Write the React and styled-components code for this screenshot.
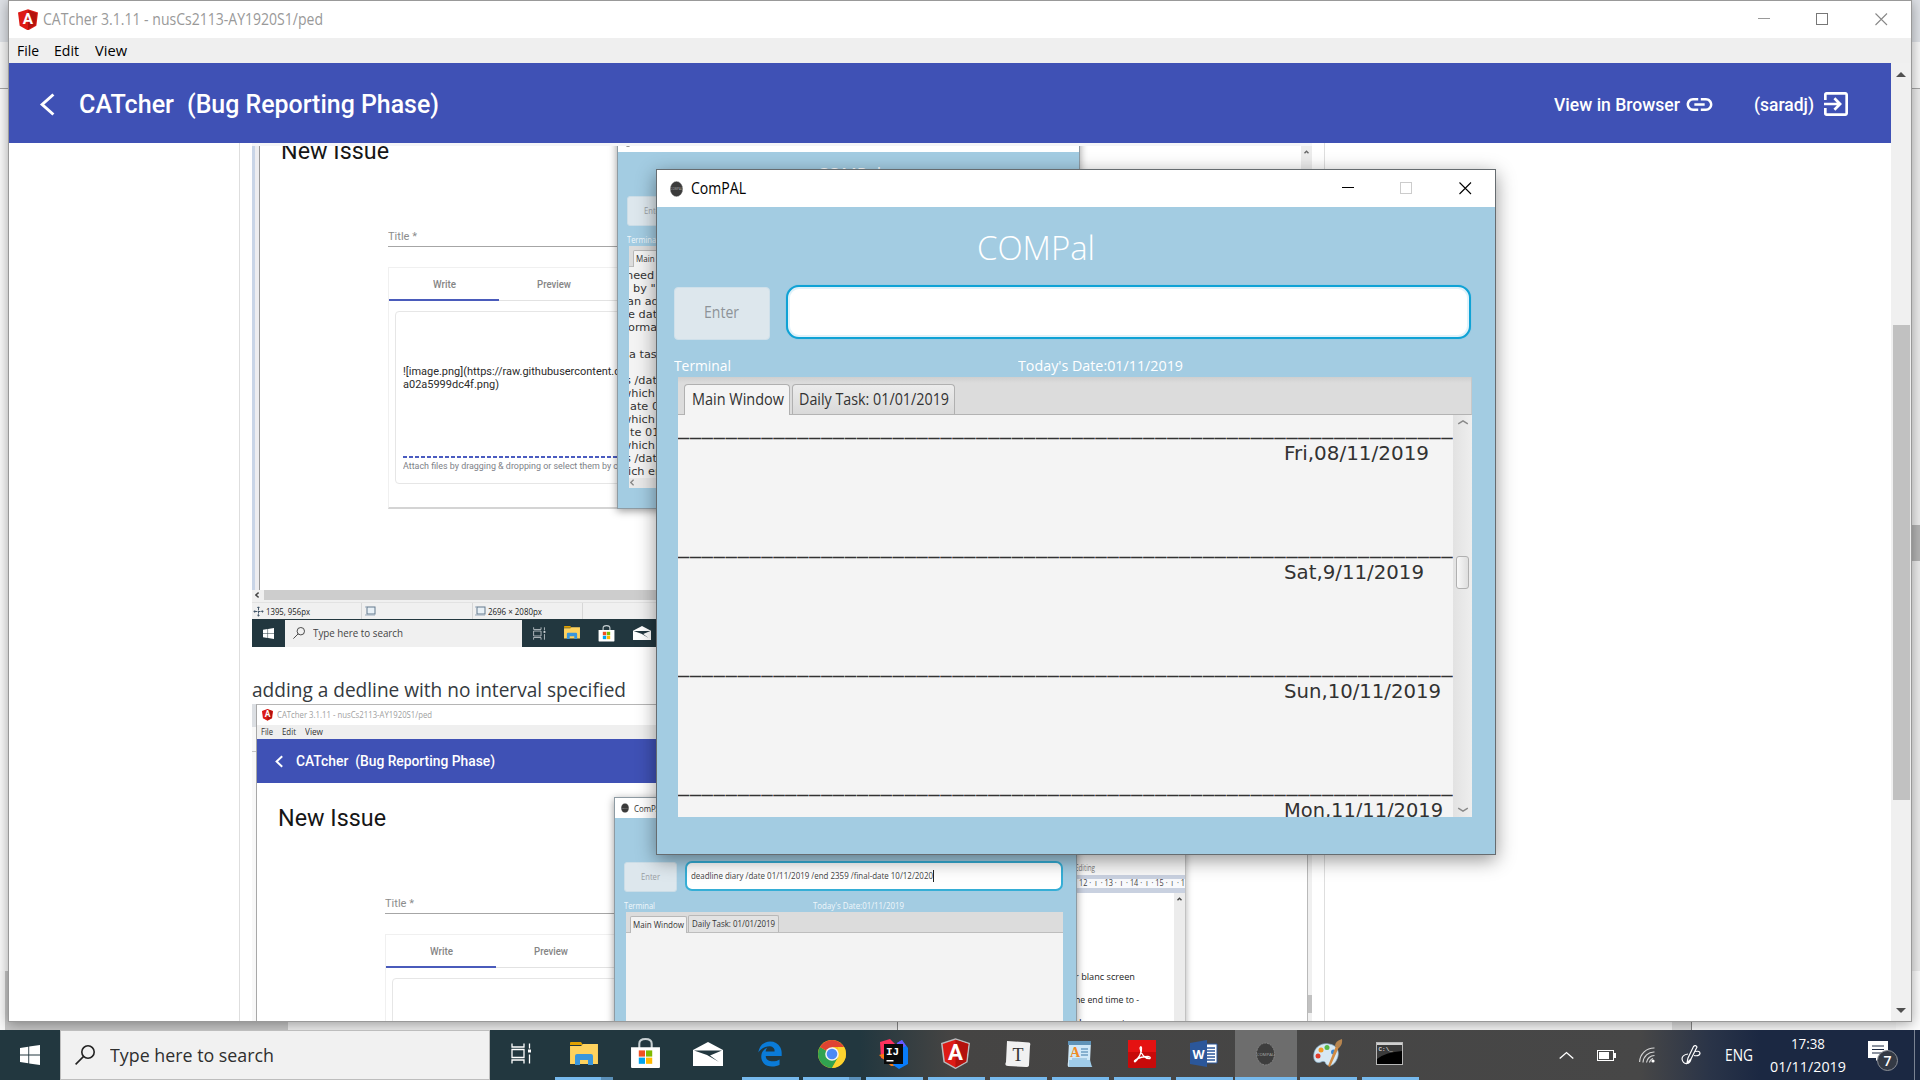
import React, { useLayoutEffect, useRef, useState } from "react";
import styled, { createGlobalStyle, css } from "styled-components";
import { MdLink, MdExitToApp } from "react-icons/md";
import { FaEdgeLegacy } from "react-icons/fa6";

const Global = createGlobalStyle`
  * { box-sizing: border-box; }
  html, body { margin: 0; padding: 0; overflow: hidden; }
  body { font-family: "Open Sans", "Noto Sans", sans-serif; }
  svg { display: block; flex: none; }
`;

const roboto = css`font-family: Roboto, "Liberation Sans", sans-serif;`;
const verdana = css`font-family: "DejaVu Sans", Verdana, sans-serif;`;

/* Text condensed or widened to a known width */
const FitBox = styled.span`
  display: block;
  flex: none;
  width: ${(p) => p.$w}px;
  margin-left: ${(p) => p.$ml || 0}px;
  white-space: pre;
`;
const FitInner = styled.span`
  display: inline-block;
  transform-origin: 0 50%;
`;
function Fit({ w, ml, children }) {
  const ref = useRef(null);
  const [scale, setScale] = useState(1);
  useLayoutEffect(() => {
    setScale(w / ref.current.getBoundingClientRect().width);
  }, []);
  return (
    <FitBox $w={w} $ml={ml}>
      <FitInner ref={ref} style={{ transform: `scaleX(${scale})` }}>{children}</FitInner>
    </FitBox>
  );
}

/* ---------- desktop ---------- */
const Desktop = styled.div`
  position: relative;
  width: 1920px;
  height: 1080px;
  overflow: hidden;
  background: #f8f8f8;
  display: flex;
  flex-direction: column;
`;
const Behind = styled.div`
  flex: 1;
  display: flex;
  justify-content: space-between;
`;
const BackEdge = styled.div`
  width: 24px;
  display: flex;
  flex-direction: column;
`;
const EdgePart = styled.div`
  height: ${(p) => p.$h}px;
  flex: none;
  margin-left: ${(p) => p.$ml || 0}px;
  background: ${(p) => p.$bg};
  border-bottom: ${(p) => (p.$line ? "1px solid #a5a5a5" : "0")};
`;
const BackBottom = styled.div`
  display: flex;
  align-self: flex-end;
  flex: 1;
  height: 14px;
  margin: 0 -19px;
`;
const BottomPart = styled.div`
  width: ${(p) => p.$w}px;
  background: ${(p) => p.$bg};
  border-right: ${(p) => (p.$line ? "1px solid #858585" : "0")};
`;

const Window = styled.div`
  position: absolute;
  left: ${(p) => p.$x}px;
  top: ${(p) => p.$y}px;
  width: ${(p) => p.$w}px;
  height: ${(p) => p.$h}px;
  border: 1px solid ${(p) => p.$border};
  box-shadow: ${(p) => p.$shadow};
  background: #fff;
  overflow: hidden;
  display: flex;
  flex-direction: column;
`;
const TitleBar = styled.div`
  height: 37px;
  flex: none;
  display: flex;
  align-items: center;
  background: #fff;
  padding: ${(p) => p.$pad};
  font-size: 15.5px;
  line-height: 20px;
  color: ${(p) => p.$color};
`;
const TitleText = styled.div`
  padding-bottom: 2px;
`;
const WinButtons = styled.div`
  margin-left: auto;
  display: flex;
  gap: 46px;
  align-items: center;
`;
const MenuBar = styled.div`
  height: 25px;
  flex: none;
  display: flex;
  align-items: center;
  background: #efefef;
  padding: 0 0 2px 8px;
  gap: 15px;
  font-size: 15px;
  color: #000;
`;
const PageRow = styled.div`
  flex: 1;
  display: flex;
  min-height: 0;
`;
const Page = styled.div`
  flex: 1;
  display: flex;
  flex-direction: column;
  min-width: 0;
`;
const Header = styled.div`
  ${roboto}
  height: 80px;
  flex: none;
  background: #3f51b5;
  color: #fff;
  display: flex;
  align-items: center;
  padding: 2px 39px 0 30px;
  font-weight: 500;
  font-size: 25px;
`;
const HeaderLinks = styled.div`
  margin-left: auto;
  display: flex;
  align-items: center;
  font-size: 18px;
`;
const Column = styled.div`
  flex: 1;
  min-height: 0;
  width: 1086px;
  margin-left: 230px;
  padding: 0 12px;
  border-left: 1px solid #dedede;
  border-right: 1px solid #dedede;
  overflow: hidden;
`;
const Paragraph = styled.div`
  height: 57px;
  padding-top: 29px;
  font-size: 20px;
  line-height: 28px;
  color: #353a40;
`;
const ScrollBar = styled.div`
  width: 20px;
  flex: none;
  background: #f0f0f0;
  display: flex;
  flex-direction: column;
  align-items: center;
  padding: 9px 0 8px;
`;
const ScrollThumb = styled.div`
  width: 17px;
  height: 475px;
  margin-top: 248px;
  background: #c1c1c1;
`;
const Spacer = styled.div`flex: 1;`;

/* ---------- embedded screenshots ---------- */
const Shot = styled.div`
  height: ${(p) => p.$h}px;
  overflow: hidden;
  display: flex;
  flex-direction: column;
  background: #fff;
`;
const TopSliver = styled.div`
  height: 3px;
  flex: none;
  background: #f4f5f8;
`;
const ShotBody = styled.div`
  flex: 1;
  min-height: 0;
  display: flex;
`;
const Strip = styled.div`
  width: ${(p) => p.$w}px;
  flex: none;
  background: ${(p) => p.$bg};
`;
const SheetArea = styled.div`
  position: relative;
  flex: 1;
  overflow: hidden;
  background: #fff;
`;
const SmallScroll = styled.div`
  width: 11px;
  flex: none;
  background: #ececec;
  padding: 4px 0 0 3px;
`;
const HScroll = styled.div`
  height: 12px;
  flex: none;
  display: flex;
  align-items: flex-start;
  background: #f0f0f0;
  padding-left: 3px;
`;
const HArrow = styled.div`
  padding-top: 2px;
`;
const HThumb = styled.div`
  flex: 1;
  height: 10px;
  margin-left: 5px;
  background: #cdcdcd;
`;
const StatusBar = styled.div`
  height: 17px;
  flex: none;
  display: flex;
  background: #f0f0f0;
  border-top: 1px solid #e2e2e2;
  font-size: 8.4px;
  color: #222;
`;
const StatusCell = styled.div`
  width: ${(p) => p.$w}px;
  display: flex;
  align-items: center;
  padding-left: ${(p) => p.$pl}px;
  gap: 2px;
  border-right: 1px solid #d7d7d7;
`;
const MiniTaskbar = styled.div`
  height: 28px;
  flex: none;
  display: flex;
  align-items: center;
  background: #22373f;
`;
const MiniSearch = styled.div`
  width: 237px;
  height: 27px;
  display: flex;
  align-items: center;
  gap: 8px;
  padding-left: 8px;
  margin-left: 11px;
  background: #f0f0f0;
  font-size: 10.5px;
  color: #444;
`;
const MiniIcons = styled.div`
  display: flex;
  align-items: center;
  gap: 18px;
  padding-left: 11px;
`;

/* issue form */
const Form = styled.div`
  ${roboto}
  padding: 23px 0 0 21px;
  margin-top: ${(p) => p.$shift || 0}px;
`;
const Heading = styled.div`
  font-size: 24px;
  line-height: 24px;
  height: 90px;
  color: #161616;
`;
const TitleField = styled.div`
  width: 600px;
  height: 18px;
  margin-left: 107px;
  font-size: 10.5px;
  line-height: 16px;
  color: #8c8c8c;
  border-bottom: 1px solid #a6a6a6;
`;
const Card = styled.div`
  width: 480px;
  height: 242px;
  margin: 20px 0 0 107px;
  border: 1px solid #f0f0f0;
  border-bottom: 2px solid #d4d4d4;
`;
const Tabs = styled.div`
  display: flex;
  height: 33px;
  border-bottom: 1px solid #e2e2e2;
`;
const Tab = styled.div`
  width: 110px;
  height: 33px;
  display: flex;
  justify-content: center;
  font-weight: 500;
  font-size: 10px;
  line-height: 33px;
  color: #858585;
  border-bottom: 2px solid ${(p) => (p.$on ? "#4a5bbb" : "transparent")};
`;
const TextBox = styled.div`
  height: 173px;
  margin: 10px 6px 0;
  border: 1px solid #e6e6e6;
  border-radius: 4px;
  padding: 53px 0 0 7px;
  font-size: 10.8px;
  line-height: 13px;
  color: #2b2b2b;
`;
const Dashed = styled.div`
  margin-top: 65px;
  height: 2px;
  background: repeating-linear-gradient(90deg, #4a5bc0 0 4px, #fff 4px 6px);
`;
const Hint = styled.div`
  font-size: 9.4px;
  line-height: 16px;
  color: #7d8187;
`;

function IssueForm({ shift, filled }) {
  return (
    <Form $shift={shift}>
      <Heading><Fit w={108}>New Issue</Fit></Heading>
      <TitleField><Fit w={29}>Title *</Fit></TitleField>
      <Card>
        <Tabs>
          <Tab $on><Fit w={23}>Write</Fit></Tab>
          <Tab><Fit w={34}>Preview</Fit></Tab>
        </Tabs>
        <TextBox>
          {filled && (
            <>
              <Fit w={217}>![image.png](https://raw.githubusercontent.c</Fit>
              <Fit w={96}>a02a5999dc4f.png)</Fit>
              <Dashed />
              <Hint><Fit w={215}>Attach files by dragging &amp; dropping or select them by c</Fit></Hint>
            </>
          )}
        </TextBox>
      </Card>
    </Form>
  );
}

/* small app window */
const MiniWindow = styled.div`
  position: absolute;
  left: ${(p) => p.$x}px;
  top: ${(p) => p.$y}px;
  width: 463px;
  height: 378px;
  background: #a3cce2;
  border: 1px solid #8e9ba3;
  box-shadow: 0 2px 8px rgba(0, 0, 0, 0.4);
  display: flex;
  flex-direction: column;
`;
const MiniTitle = styled.div`
  height: 20px;
  flex: none;
  display: flex;
  align-items: center;
  gap: 5px;
  padding-left: 6px;
  background: #fff;
  font-size: 9px;
  color: #333;
`;
const MiniName = styled.div`
  height: 43px;
  flex: none;
  display: flex;
  justify-content: center;
  align-items: center;
  padding: 1px 0 0 0;
  font-size: 19px;
  color: #fff;
`;
const MiniRow = styled.div`
  display: flex;
  flex: none;
  gap: 8px;
  padding-left: 9px;
  height: 31px;
`;
const MiniEnter = styled.div`
  width: 53px;
  height: 30px;
  margin-top: 1px;
  background: #dde7ed;
  border: 1px solid #cbdde7;
  border-radius: 3px;
  display: flex;
  align-items: center;
  justify-content: center;
  font-size: 8.8px;
  color: #999da3;
`;
const MiniInput = styled.div`
  width: 378px;
  height: 30px;
  background: #fff;
  border: 2px solid #35aed6;
  border-radius: 7px;
  display: flex;
  align-items: center;
  padding-left: 4px;
  font-size: 8.8px;
  color: #3f3f3f;
`;
const Caret = styled.div`
  width: 1px;
  height: 12px;
  background: #222;
`;
const MiniLabels = styled.div`
  display: flex;
  flex: none;
  height: 20px;
  padding: 7px 0 0 9px;
  font-size: 9px;
  line-height: 14px;
  color: #f0f7fb;
`;
const MiniPanel = styled.div`
  width: 437px;
  margin-left: 11px;
  flex: none;
  height: ${(p) => p.$h}px;
  background: #f3f3f3;
  display: flex;
  flex-direction: column;
`;
const MiniTabs = styled.div`
  height: 21px;
  flex: none;
  display: flex;
  align-items: flex-end;
  gap: 1px;
  padding-left: 4px;
  background: #dcdcdc;
  border-bottom: 1px solid #bdbdbd;
`;
const MiniTab = styled.div`
  width: ${(p) => p.$w}px;
  height: 17px;
  margin-bottom: ${(p) => (p.$on ? -1 : 0)}px;
  display: flex;
  justify-content: center;
  align-items: center;
  font-size: 8.8px;
  color: #333;
  border: 1px solid #b8b8b8;
  border-bottom: 0;
  border-radius: 2px 2px 0 0;
  background: ${(p) => (p.$on ? "#f3f3f3" : "#e2e2e2")};
`;
const MiniText = styled.div`
  ${verdana}
  flex: 1;
  overflow: hidden;
  padding-top: 2px;
  font-size: 11.3px;
  line-height: 13.1px;
  color: #333;
`;
const MiniLine = styled.div`
  height: 13.1px;
  white-space: pre;
  text-indent: ${(p) => p.$dx}px;
`;
const MiniFoot = styled.div`
  height: 10px;
  flex: none;
  background: #e9e9e9;
  padding: 1px 0 0 1px;
`;

function MiniCompal({ x, y, command, lines }) {
  return (
    <MiniWindow $x={x} $y={y}>
      <MiniTitle><CompalIcon w={8} h={10} /><Fit w={31}>ComPAL</Fit></MiniTitle>
      <MiniName><Fit w={64}>COMPal</Fit></MiniName>
      <MiniRow>
        <MiniEnter><Fit w={19}>Enter</Fit></MiniEnter>
        <MiniInput>{command && <><Fit w={242}>{command}</Fit><Caret /></>}</MiniInput>
      </MiniRow>
      <MiniLabels><Fit w={31}>Terminal</Fit><Fit w={91} ml={158}>Today's Date:01/11/2019</Fit></MiniLabels>
      <MiniPanel $h={lines ? 242 : 400}>
        <MiniTabs>
          <MiniTab $on $w={57}><Fit w={51}>Main Window</Fit></MiniTab>
          <MiniTab $w={91}><Fit w={83}>Daily Task: 01/01/2019</Fit></MiniTab>
        </MiniTabs>
        <MiniText>
          {(lines || []).map(([t, dx], i) => <MiniLine key={i} $dx={dx}>{t}</MiniLine>)}
        </MiniText>
        {lines && <MiniFoot><Chevron w={4} h={7} dir="left" color="#888" /></MiniFoot>}
      </MiniPanel>
    </MiniWindow>
  );
}
const HELP = [
  ["need to", -3], ["by \"[", 4], ["an add", -2], ["e date", -1], ["ormat", -1], ["", 0],
  ["a task", 0], ["", 0], ["s /date", -4], ["which e", -7], ["ate 01", 1], ["which e", -7],
  ["te 01/", 1], ["which e", -7], ["s /date", -4], ["ich en", -1],
];

/* second screenshot chrome */
const SideStrip = styled.div`
  width: 4px;
  flex: none;
  background: linear-gradient(#dcdfe3 0 23px, #f8f8f8 23px 47px, #c4c4c4 47px 48px, #f8f8f8 48px);
`;
const MiniBrowser = styled.div`
  flex: 1;
  min-width: 0;
  display: flex;
  flex-direction: column;
  border-top: 1px solid #b5b5b5;
  border-left: 1px solid #a8a8a8;
`;
const MBTitle = styled.div`
  height: 20px;
  flex: none;
  display: flex;
  align-items: center;
  gap: 4px;
  padding-left: 5px;
  font-size: 8.8px;
  color: #a0a0a0;
`;
const MBMenu = styled.div`
  height: 14px;
  flex: none;
  display: flex;
  align-items: center;
  gap: 9px;
  padding-left: 4px;
  background: #efefef;
  font-size: 8.6px;
  color: #333;
`;
const MBHeader = styled.div`
  ${roboto}
  height: 44px;
  flex: none;
  display: flex;
  align-items: center;
  gap: 13px;
  padding-left: 18px;
  background: #3f51b5;
  color: #fff;
  font-size: 13.8px;
  font-weight: 500;
`;
const RightRail = styled.div`
  width: 5px;
  flex: none;
  background: #f0f0f0;
  border-left: 1px solid #b9b9b9;
  padding-top: 212px;
`;
const RailThumb = styled.div`
  width: 4px;
  height: 18px;
  background: #c1c1c1;
`;
const DocWindow = styled.div`
  position: absolute;
  left: 780px;
  top: 20px;
  width: 149px;
  height: 300px;
  background: #fff;
  border-right: 1px solid #c2c2c2;
  box-shadow: 1px 0 6px rgba(0, 0, 0, 0.25);
  display: flex;
  flex-direction: column;
`;
const Ribbon = styled.div`
  height: 72px;
  flex: none;
  padding: 57px 0 0 38px;
  font-size: 8.4px;
  line-height: 16px;
  color: #777;
  background: #f8f8f8;
`;
const Ruler = styled.div`
  height: 18px;
  flex: none;
  display: flex;
  align-items: center;
  padding: 0 0 2px 42px;
  font-size: 8.8px;
  color: #444;
  background: linear-gradient(#c9d1e0 0 4px, #f8f9fc 4px 13px, #c9d1e0 13px);
`;
const DocBody = styled.div`
  flex: 1;
  display: flex;
`;
const DocText = styled.div`
  flex: 1;
  padding: 78px 0 0 38px;
  font-size: 9px;
  line-height: 12px;
  color: #222;
  display: flex;
  flex-direction: column;
  gap: 11px;
`;

/* ---------- main app window ---------- */
const AppBody = styled.div`
  flex: 1;
  background: #a3cce2;
  display: flex;
  flex-direction: column;
`;
const AppName = styled.div`
  height: 78px;
  display: flex;
  padding: 16px 0 0 320px;
  font-size: 33.5px;
  line-height: 48px;
  font-weight: 300;
  color: #fff;
`;
const InputRow = styled.div`
  display: flex;
  padding-left: 17px;
  gap: 16px;
  height: 54px;
`;
const EnterButton = styled.div`
  width: 96px;
  height: 53px;
  margin-top: 2px;
  padding: 0 1px 3px 0;
  border-radius: 4px;
  background: #dde7ed;
  border: 1px solid #cfe0ea;
  display: flex;
  align-items: center;
  justify-content: center;
  font-size: 15.5px;
  color: #8d9398;
`;
const InputField = styled.div`
  width: 685px;
  height: 54px;
  background: #fff;
  border: 2px solid #0fa2d5;
  border-radius: 13px;
  box-shadow: inset 0 0 0 2px #e0f2fa, 0 0 1px #4db6de;
`;
const LabelRow = styled.div`
  display: flex;
  height: 38px;
  padding: 15px 0 0 17px;
  font-size: 15.3px;
  line-height: 22px;
  color: #fff;
`;
const Panel = styled.div`
  width: 794px;
  height: 440px;
  margin-left: 21px;
  display: flex;
  flex-direction: column;
`;
const TabStrip = styled.div`
  height: 38px;
  flex: none;
  display: flex;
  align-items: flex-end;
  gap: 2px;
  padding-left: 6px;
  background: linear-gradient(#cfcfcf, #dcdcdc 6px);
  border-bottom: 1px solid #b3b3b3;
  border-right: 1px solid #c8c8c8;
`;
const AppTab = styled.div`
  width: ${(p) => p.$w}px;
  height: ${(p) => (p.$on ? 31 : 30)}px;
  margin-bottom: ${(p) => (p.$on ? -1 : 0)}px;
  padding: 4px 0 0 ${(p) => (p.$on ? 7 : 6)}px;
  border: 1px solid #b0b0b0;
  border-bottom: 0;
  border-radius: 4px 4px 0 0;
  background: ${(p) => (p.$on ? "#f4f4f4" : "linear-gradient(#ececec, #d9d9d9)")};
  font-size: 15.5px;
  line-height: 20px;
  color: #323232;
`;
const PanelBody = styled.div`
  flex: 1;
  min-height: 0;
  display: flex;
  background: #f4f4f4;
`;
const Days = styled.div`
  ${verdana}
  width: 775px;
  overflow: hidden;
  color: #323232;
`;
const Day = styled.div`
  height: 119px;
`;
const Rule = styled.div`
  height: 24px;
  font-size: 22px;
  line-height: 24px;
  letter-spacing: 0.93px;
  white-space: pre;
  overflow: visible;
`;
const DayLabel = styled.div`
  padding-left: 606px;
  font-size: 19px;
  line-height: 28px;
`;
const PanelScroll = styled.div`
  width: 19px;
  background: linear-gradient(90deg, #e2e2e2, #eeeeee);
  display: flex;
  flex-direction: column;
  align-items: center;
  padding: 4px 0;
`;
const PanelThumb = styled.div`
  width: 13px;
  height: 33px;
  margin-top: 131px;
  border: 1px solid #b0b0b0;
  border-radius: 3px;
  background: linear-gradient(90deg, #f8f8f8, #dedede);
`;

/* ---------- taskbar ---------- */
const Taskbar = styled.div`
  position: relative;
  height: 50px;
  flex: none;
  display: flex;
  background: linear-gradient(90deg, #22373f 0, #22373f 860px, #454443 950px, #474747 1640px, #2a3448 1710px, #1b2842 1760px, #1b2842 100%);
`;
const StartButton = styled.div`
  width: 60px;
  display: flex;
  align-items: center;
  padding-left: 20px;
`;
const SearchBox = styled.div`
  width: 430px;
  border: 1px solid #bdbdbd;
  background: #f1f1f1;
  display: flex;
  align-items: center;
  padding-left: 14px;
  gap: 15px;
  font-size: 19px;
  color: #2e2e2e;
`;
const Slot = styled.div`
  width: ${(p) => p.$w || 62}px;
  display: flex;
  align-items: center;
  justify-content: center;
  padding-right: 1px;
  background: ${(p) => (p.$active ? "#6d6d6d" : "transparent")};
  border-bottom: 3px solid transparent;
  border-image: ${(p) => {
    if (p.$active) return "linear-gradient(#76b9ed, #76b9ed) 3";
    if (p.$run === "multi") return "linear-gradient(90deg, transparent 5px, #76b9ed 5px 46px, #5a8fb8 46px 57px, transparent 57px) 3";
    if (p.$run) return "linear-gradient(90deg, transparent 6px, #76b9ed 6px 57px, transparent 57px) 3";
    return "none";
  }};
`;
const Tray = styled.div`
  margin-left: auto;
  display: flex;
  align-items: center;
  color: #fff;
  font-size: 15.5px;
`;
const TrayIcon = styled.div`
  width: ${(p) => p.$w}px;
`;
const Clock = styled.div`
  width: 99px;
  display: flex;
  flex-direction: column;
  align-items: center;
  line-height: 23px;
  padding-right: 8px;
  font-size: 15px;
`;
const Notice = styled.div`
  width: 46px;
  padding-top: 3px;
`;
const ShowDesktop = styled.div`
  width: 6px;
  height: 50px;
  border-left: 1px solid #7a8392;
`;

/* ---------- icons ---------- */
function Chevron({ w, h, dir, color, sw = 1.4 }) {
  const pts = { left: "M9 1L2 5L9 9", up: "M1 8L5 3L9 8", down: "M1 2L5 7L9 2" }[dir];
  return (
    <svg width={w} height={h} viewBox="0 0 10 10" preserveAspectRatio="none">
      <path d={pts} fill="none" stroke={color} strokeWidth={sw} vectorEffect="non-scaling-stroke" />
    </svg>
  );
}
const Triangle = ({ down }) => (
  <svg width="10" height="5" viewBox="0 0 10 5"><path d={down ? "M0 0h10L5 5z" : "M0 5h10L5 0z"} fill="#505050" /></svg>
);
const AngularIcon = ({ s, rim }) => (
  <svg width={s} height={s * 1.08} viewBox="0 0 30 32">
    <path d="M15 0L30 5L27.500 25L15 32L2.500 25L0 5z" fill={rim ? "#b9bcbe" : "#dd1b16"} />
    <path d="M15 1.500L28.300 6L26 24.200L15 30.300L4 24.200L1.700 6z" fill="#dd1b16" />
    <path d="M15 1.500L28.300 6L26 24.200L15 30.300z" fill="#b3120e" />
    <text x="15" y="23" fontSize="23" fontWeight="700" fontFamily="Roboto" textAnchor="middle" fill="#fff">A</text>
  </svg>
);
const CompalIcon = ({ w, h, dim }) => (
  <svg width={w} height={h} viewBox="0 0 20 24">
    <ellipse cx="10" cy="12" rx="9.500" ry="11.500" fill={dim ? "#3e3e3e" : "#3b3b3b"} stroke={dim ? "#858585" : "#888"} strokeWidth="1" strokeDasharray="2 1" />
    <text x="10" y="14" fontSize="4.500" fontFamily="Open Sans" textAnchor="middle" fill="#aaa">COMPAL</text>
  </svg>
);
const WinGlyph = ({ kind, color }) => (
  <svg width="13" height="13" viewBox="0 0 13 13" shapeRendering={kind === "x" ? "auto" : "crispEdges"}>
    {kind === "min" && <path d="M1 5.500h12" stroke={color} />}
    {kind === "max" && <rect x=".5" y=".5" width="11" height="11" fill="none" stroke={color} />}
    {kind === "x" && <path d="M.5 .5l11.500 11.500M12 .5L.5 12" stroke={color} strokeWidth="1.100" />}
  </svg>
);
const Windows = ({ s }) => (
  <svg width={s} height={s} viewBox="0 0 20 20"><path d="M0 3L8.300 1.800V9.600H0zM9.200 1.600L20 0V9.600H9.200zM0 10.500H8.300V18.200L0 17zM9.200 10.500H20V20L9.200 18.400z" fill="#fff" /></svg>
);
const Magnifier = ({ s, color }) => (
  <svg width={s} height={s} viewBox="0 0 20 20" fill="none" stroke={color} strokeWidth="1.600"><circle cx="13" cy="7" r="6.200" /><path d="M8.600 11.400L.6 19.400" /></svg>
);
const TaskView = ({ s, color = "#fff" }) => (
  <svg width={s} height={s} viewBox="0 0 21 20" fill="none" stroke={color} strokeWidth="1.300">
    <path d="M1 0V3.500H13V0M1 20V16.500H13V20M1 6H13V14H1zM18.500 0V5M18.500 11V20" /><path d="M17 6h3v3h-3z" fill={color} stroke="none" />
  </svg>
);
const Folder = ({ s }) => (
  <svg width={s} height={s * 0.82} viewBox="0 0 28 23">
    <path d="M0 1q0-1 1-1h10l2 3H0z" fill="#e0a000" /><path d="M0 4h11l2-2h15v20H0z" fill="#ffd25e" />
    <path d="M5 23v-9q0-2 2-2h14q2 0 2 2v9h-5v-5h-8v5z" fill="#3a96dd" />
  </svg>
);
const Store = ({ s }) => (
  <svg width={s} height={s} viewBox="0 0 30 30">
    <path d="M9 10V5.500Q9 1 15 1T21 5.500V10" fill="none" stroke="#c8d0d3" strokeWidth="2" />
    <path d="M1 9h28v19q0 1-1 1H2q-1 0-1-1z" fill="#fff" />
    <path d="M8.500 12h6v6h-6z" fill="#f25022" /><path d="M15.500 12h6v6h-6z" fill="#7fba00" /><path d="M8.500 19h6v6h-6z" fill="#00a4ef" /><path d="M15.500 19h6v6h-6z" fill="#ffb900" />
  </svg>
);
const Mail = ({ s }) => (
  <svg width={s} height={s * 0.8} viewBox="0 0 30 24">
    <path d="M0 8L15 0L30 8V24H0z" fill="#fff" /><path d="M1 8.500H29L17 13.500L26 20L14 13z" fill="#22373f" />
  </svg>
);
const Chrome = () => (
  <svg width="28" height="28" viewBox="0 0 28 28">
    <circle cx="14" cy="14" r="14" fill="#fbc116" />
    <path d="M14 14L1.900 7A14 14 0 0 0 14 28z" fill="#31a350" /><path d="M14 28L20 17.500L14 14L6 16z" fill="#31a350" />
    <path d="M14 14L1.900 7A14 14 0 0 1 26.100 7H14z" fill="#df4332" /><path d="M26.100 7a14 14 0 0 1-12.100 21l6-10.500V7z" fill="#fdd32f" />
    <circle cx="14" cy="14" r="6.800" fill="#f3f3f3" /><circle cx="14" cy="14" r="5.300" fill="#4a8af4" />
  </svg>
);
const IntelliJ = () => (
  <svg width="30" height="30" viewBox="0 0 30 30">
    <path d="M1 3L11 0L17 6L10 22L2 19z" fill="#fe315d" /><path d="M0 16L8 14L18 27L12 27z" fill="#f97a12" />
    <path d="M18 4L23 1L29 9V25L20 30L14 26z" fill="#087cfa" /><path d="M18 4L23 1L27 7L20 10z" fill="#6b57ff" />
    <rect x="5" y="5" width="19" height="20" fill="#0a0a0a" />
    <text x="7" y="16" fontSize="11" fontWeight="700" fontFamily="Liberation Mono" fill="#fff">IJ</text><path d="M7.500 21h7v1.500h-7z" fill="#fff" />
  </svg>
);
const Typora = () => (
  <svg width="28" height="28" viewBox="0 0 28 28">
    <path d="M3 1L25 2.500Q27 3 26 6L25 25Q25 27 22 27L4 26Q0 26 2 22z" fill="#f1f1f1" />
    <text x="14" y="20.500" fontSize="18" fontFamily="Liberation Serif" textAnchor="middle" fill="#333">T</text>
  </svg>
);
const WordPad = () => (
  <svg width="26" height="28" viewBox="0 0 26 28">
    <path d="M2 1H24L23 22Q23 27 26 27H2Q0 27 1 22z" fill="#cfe8f8" /><path d="M1 1H24V5H1z" fill="#5f93b8" /><path d="M2 20H23L25 27H2z" fill="#9fcbe8" />
    <text x="3" y="17" fontSize="14" fontWeight="700" fontFamily="Liberation Serif" fill="#f08a24">A</text>
    <path d="M14 9h7M14 12h7M14 15h7" stroke="#3c78a8" strokeWidth="1.100" /><path d="M5 19h15" stroke="#7fb0d2" />
  </svg>
);
const Acrobat = () => (
  <svg width="28" height="28" viewBox="0 0 28 28">
    <rect width="28" height="28" rx="1" fill="#c80a0a" /><path d="M0 0h28v12H0z" fill="#e51212" />
    <path d="M6 21C11 19 14 12 13.500 8Q13 5.500 12 8C12.500 14 17 19 22 18.500Q23 17 20 16.500Q13 16.500 8 19.500Q5.500 21.500 7 21.800Q9 21 12 15" fill="none" stroke="#fff" strokeWidth="1.300" />
  </svg>
);
const Word = () => (
  <svg width="28" height="27" viewBox="0 0 28 27">
    <path d="M13 4H27V23H13z" fill="#fff" stroke="#2b579a" /><path d="M16 8h9M16 11h9M16 14h9M16 17h9M16 20h9" stroke="#2b579a" strokeWidth="1.300" />
    <path d="M0 3L17 0V27L0 24z" fill="#2b579a" /><text x="8.500" y="18.500" fontSize="12.500" fontWeight="700" fontFamily="Open Sans" textAnchor="middle" fill="#fff">W</text>
  </svg>
);
const Paint = () => (
  <svg width="31" height="30" viewBox="0 0 31 30">
    <path d="M2 20C0 10 8 3 17 5C26 6 28 14 25 20C22 27 17 28 14 25Q13 21 9 23Q4 25 2 20z" fill="#d7e8f3" stroke="#8ab0c8" strokeWidth=".7" />
    <circle cx="6" cy="17" r="2.500" fill="#e23c2c" /><circle cx="9" cy="11" r="2.500" fill="#f39a24" /><circle cx="15" cy="8.500" r="2.500" fill="#57b947" /><circle cx="21.500" cy="13" r="2.500" fill="#3a86d0" />
    <path d="M16 27L24 7L27 8L18 28z" fill="#d08a42" /><path d="M23 7Q23 2 30 0Q31 5 27 9z" fill="#b7854f" />
  </svg>
);
const Cmd = () => (
  <svg width="27" height="23" viewBox="0 0 27 23">
    <rect x=".5" y=".5" width="26" height="22" fill="#000" stroke="#b8b8b8" /><path d="M1 1h25v2H1z" fill="#d0d0d0" /><path d="M1 3H26V9Q10 10 1 17z" fill="#3a3a3a" />
    <text x="2.500" y="9" fontSize="6" fontFamily="Liberation Mono" fill="#fff">C:\_</text>
  </svg>
);
const Battery = () => (
  <svg width="19" height="11" viewBox="0 0 19 11" shapeRendering="crispEdges"><rect x=".5" y=".5" width="16" height="10" fill="none" stroke="#fff" /><path d="M2 2h10v7H2zM17 3h2v5h-2z" fill="#fff" /></svg>
);
const Wifi = () => (
  <svg width="16" height="16" viewBox="0 0 16 16" fill="none" stroke="#d5d5d5" strokeWidth="1.200">
    <path d="M.6 15A14.500 14.500 0 0 1 15.500 1M4 15.500A11 11 0 0 1 15.500 5M7.500 15.500A8 8 0 0 1 15.500 8.500M10.500 15.500A5 5 0 0 1 14 11.500" /><circle cx="14" cy="14" r="1.600" fill="#fff" stroke="none" />
  </svg>
);
const Pen = () => (
  <svg width="20" height="20" viewBox="0 0 20 20" fill="none" stroke="#fff" strokeWidth="1.200">
    <path d="M7 13L12.500 1.500Q14.500-.5 16 2L10 14L6 18zM7 9Q1 10 1 14Q2 19 6 18.500Q9 18 10 14M14.500 6.500Q19 5.500 19 8.500Q18 11.500 13 10.500" />
  </svg>
);
const Notify = () => (
  <svg width="31" height="31" viewBox="0 0 31 31">
    <path d="M0 0H20V17H11L8 20V17H0z" fill="#fff" /><path d="M4 5h12M4 8.500h12M4 12h12" stroke="#1b2842" strokeWidth="1.200" />
    <circle cx="19.500" cy="19.500" r="10" fill="#343a45" stroke="#8b8f96" />
    <text x="19.500" y="24.500" fontSize="14" fontWeight="600" fontFamily="Open Sans" textAnchor="middle" fill="#fff">7</text>
  </svg>
);
const Cross = () => (
  <svg width="11" height="11" viewBox="0 0 11 11" fill="none" stroke="#45586b" strokeWidth="1"><path d="M5.500 1V10M1 5.500H10M4.300 2L5.500.8L6.700 2M4.300 9L5.500 10.200L6.700 9M2 4.300L.8 5.500L2 6.700M9 4.300L10.200 5.500L9 6.700" strokeDasharray="3 .6" /></svg>
);
const Frame = () => (
  <svg width="11" height="10" viewBox="0 0 11 10"><rect x="2" y="1" width="8" height="7" fill="#e8f0f6" stroke="#63788c" /><path d="M0 1h2M0 9h10" stroke="#9ab" /></svg>
);

const DATES = [["Fri,08/11/2019", 145], ["Sat,9/11/2019", 140], ["Sun,10/11/2019", 157], ["Mon,11/11/2019", 159]];
const UNDERSCORES = "_".repeat(65);
const LeadIn = styled.div`height: ${(p) => p.$h}px;`;

export default function App() {
  return (
    <Desktop>
      <Global />
      <Behind>
        <BackEdge>
          <EdgePart $h={42} $bg="#dee1e6" />
          <EdgePart $h={47} $bg="#f6f6f6" $line />
          <EdgePart $h={882} $bg="#fafafa" />
          <EdgePart $h={59} $bg="#c6c6c6" $ml={5} />
        </BackEdge>
        <BackBottom>
          <BottomPart $w={283} $bg="#c6c6c6" />
          <BottomPart $w={610} $bg="#ececec" $line />
          <BottomPart $w={774} $bg="#f6f6f6" />
          <BottomPart $w={20} $bg="#dcdcdc" $line />
        </BackBottom>
        <BackEdge>
          <EdgePart $h={42} $bg="#dee1e6" />
          <EdgePart $h={47} $bg="#f8f8f8" $line />
          <EdgePart $h={436} $bg="#ececec" />
          <EdgePart $h={36} $bg="#b4b4b4" />
          <EdgePart $h={410} $bg="#ececec" />
          <EdgePart $h={59} $bg="#fdfdfd" />
        </BackEdge>
      </Behind>

      <Window $x={8} $y={0} $w={1904} $h={1022} $border="#999" $shadow="0 2px 12px rgba(0,0,0,.35)">
        <TitleBar $pad="0 23px 0 9px" $color="#999">
          <AngularIcon s={20} />
          <TitleText><Fit w={280} ml={5}>CATcher 3.1.11 - nusCs2113-AY1920S1/ped</Fit></TitleText>
          <WinButtons>
            <WinGlyph kind="min" color="#999" />
            <WinGlyph kind="max" color="#777" />
            <WinGlyph kind="x" color="#888" />
          </WinButtons>
        </TitleBar>
        <MenuBar><Fit w={22}>File</Fit><Fit w={25}>Edit</Fit><Fit w={32} ml={1}>View</Fit></MenuBar>
        <PageRow>
          <Page>
            <Header>
              <Chevron w={16} h={25} dir="left" color="#fff" sw={3} />
              <Fit w={95} ml={24}>CATcher</Fit>
              <Fit w={252} ml={13}>(Bug Reporting Phase)</Fit>
              <HeaderLinks>
                <Fit w={126}>View in Browser</Fit>
                <MdLink size={31} style={{ marginLeft: 4 }} />
                <Fit w={60} ml={39}>(saradj)</Fit>
                <MdExitToApp size={32} style={{ marginLeft: 6 }} />
              </HeaderLinks>
            </Header>
            <Column>
              <Shot $h={504}>
                <TopSliver />
                <ShotBody>
                  <Strip $w={3} $bg="#c9d5e7" />
                  <Strip $w={4} $bg="#ededf0" />
                  <Strip $w={1} $bg="#999" />
                  <SheetArea>
                    <IssueForm shift={-30} filled />
                    <MiniCompal x={357} y={-15} lines={HELP} />
                  </SheetArea>
                  <SmallScroll><Chevron w={5} h={4} dir="up" color="#666" /></SmallScroll>
                </ShotBody>
                <HScroll><HArrow><Chevron w={4} h={6} dir="left" color="#444" /></HArrow><HThumb /></HScroll>
                <StatusBar>
                  <StatusCell $w={110} $pl={1}><Cross /><Fit w={44}>1395, 956px</Fit></StatusCell>
                  <StatusCell $w={111} $pl={3}><Frame /></StatusCell>
                  <StatusCell $w={110} $pl={2}><Frame /><Fit w={54}>2696 × 2080px</Fit></StatusCell>
                </StatusBar>
                <MiniTaskbar>
                  <Strip $w={11} $bg="transparent" />
                  <Windows s={11} />
                  <MiniSearch><Magnifier s={12} color="#444" /><Fit w={90}>Type here to search</Fit></MiniSearch>
                  <MiniIcons><TaskView s={13} color="#c9d0d3" /><Folder s={16} /><Store s={17} /><Mail s={18} /></MiniIcons>
                </MiniTaskbar>
              </Shot>
              <Paragraph><Fit w={374}>adding a dedline with no interval specified</Fit></Paragraph>
              <Shot $h={317}>
                <ShotBody>
                  <SideStrip />
                  <MiniBrowser>
                    <MBTitle><AngularIcon s={11} /><Fit w={155}>CATcher 3.1.11 - nusCs2113-AY1920S1/ped</Fit></MBTitle>
                    <MBMenu><Fit w={12}>File</Fit><Fit w={14}>Edit</Fit><Fit w={18}>View</Fit></MBMenu>
                    <MBHeader>
                      <Chevron w={8} h={13} dir="left" color="#fff" sw={2} />
                      <Fit w={199}>CATcher  (Bug Reporting Phase)</Fit>
                    </MBHeader>
                    <SheetArea>
                      <IssueForm />
                      <DocWindow>
                        <Ribbon><Fit w={20}>Editing</Fit></Ribbon>
                        <Ruler><Fit w={106}>12 ·  ı  · 13 ·  ı  · 14 ·  ı  · 15 ·  ı  · 1</Fit></Ruler>
                        <DocBody>
                          <DocText>
                            <Fit w={60}>r blanc screen</Fit>
                            <Fit w={64}>ne end time to -</Fit>
                            <Fit w={60} ml={4}>her event as</Fit>
                          </DocText>
                          <SmallScroll><Chevron w={5} h={4} dir="up" color="#444" /></SmallScroll>
                        </DocBody>
                      </DocWindow>
                      <MiniCompal x={357} y={14} command="deadline diary /date 01/11/2019 /end 2359 /final-date 10/12/2020" />
                    </SheetArea>
                  </MiniBrowser>
                  <RightRail>
                    <LeadIn $h={79} />
                    <RailThumb />
                  </RightRail>
                </ShotBody>
              </Shot>
            </Column>
          </Page>
          <ScrollBar>
            <Triangle />
            <ScrollThumb />
            <Spacer />
            <Triangle down />
          </ScrollBar>
        </PageRow>
      </Window>

      <Window $x={656} $y={169} $w={840} $h={686} $border="#666c70" $shadow="0 5px 18px rgba(0,0,0,.42)">
        <TitleBar $pad="0 23px 0 13px" $color="#000">
          <CompalIcon w={13} h={16} />
          <TitleText><Fit w={55} ml={8}>ComPAL</Fit></TitleText>
          <WinButtons>
            <WinGlyph kind="min" color="#000" />
            <WinGlyph kind="max" color="#ccc" />
            <WinGlyph kind="x" color="#000" />
          </WinButtons>
        </TitleBar>
        <AppBody>
          <AppName><Fit w={118}>COMPal</Fit></AppName>
          <InputRow>
            <EnterButton><Fit w={35}>Enter</Fit></EnterButton>
            <InputField />
          </InputRow>
          <LabelRow><Fit w={57}>Terminal</Fit><Fit w={165} ml={287}>Today's Date:01/11/2019</Fit></LabelRow>
          <Panel>
            <TabStrip>
              <AppTab $on $w={106}><Fit w={92}>Main Window</Fit></AppTab>
              <AppTab $w={163}><Fit w={150}>Daily Task: 01/01/2019</Fit></AppTab>
            </TabStrip>
            <PanelBody>
              <Days>
                {DATES.map(([d, w]) => (
                  <Day key={d}>
                    <Rule>{UNDERSCORES}</Rule>
                    <DayLabel><Fit w={w}>{d}</Fit></DayLabel>
                  </Day>
                ))}
              </Days>
              <PanelScroll>
                <Chevron w={12} h={6} dir="up" color="#888" />
                <PanelThumb />
                <Spacer />
                <Chevron w={12} h={6} dir="down" color="#888" />
              </PanelScroll>
            </PanelBody>
          </Panel>
        </AppBody>
      </Window>

      <Taskbar>
        <StartButton><Windows s={20} /></StartButton>
        <SearchBox><Magnifier s={20} color="#222" /><Fit w={164}>Type here to search</Fit></SearchBox>
        <Slot $w={63}><TaskView s={21} /></Slot>
        <Slot $run="multi"><Folder s={28} /></Slot>
        <Slot><Store s={31} /></Slot>
        <Slot><Mail s={30} /></Slot>
        <Slot $run><FaEdgeLegacy size={26} color="#0a7bd8" /></Slot>
        <Slot $run="multi"><Chrome /></Slot>
        <Slot $run><IntelliJ /></Slot>
        <Slot $run><AngularIcon s={29} rim /></Slot>
        <Slot $run><Typora /></Slot>
        <Slot $run><WordPad /></Slot>
        <Slot $run><Acrobat /></Slot>
        <Slot $run><Word /></Slot>
        <Slot $active><CompalIcon w={19} h={24} dim /></Slot>
        <Slot $run><Paint /></Slot>
        <Slot $run><Cmd /></Slot>
        <Tray>
          <TrayIcon $w={39}><Chevron w={17} h={12} dir="up" color="#fff" /></TrayIcon>
          <TrayIcon $w={42}><Battery /></TrayIcon>
          <TrayIcon $w={42}><Wifi /></TrayIcon>
          <TrayIcon $w={44}><Pen /></TrayIcon>
          <Fit w={28}>ENG</Fit>
          <Strip $w={9} $bg="transparent" />
          <Clock><Fit w={34}>17:38</Fit><Fit w={76}>01/11/2019</Fit></Clock>
          <Strip $w={7} $bg="transparent" />
          <Notice><Notify /></Notice>
          <ShowDesktop />
        </Tray>
      </Taskbar>
    </Desktop>
  );
}
